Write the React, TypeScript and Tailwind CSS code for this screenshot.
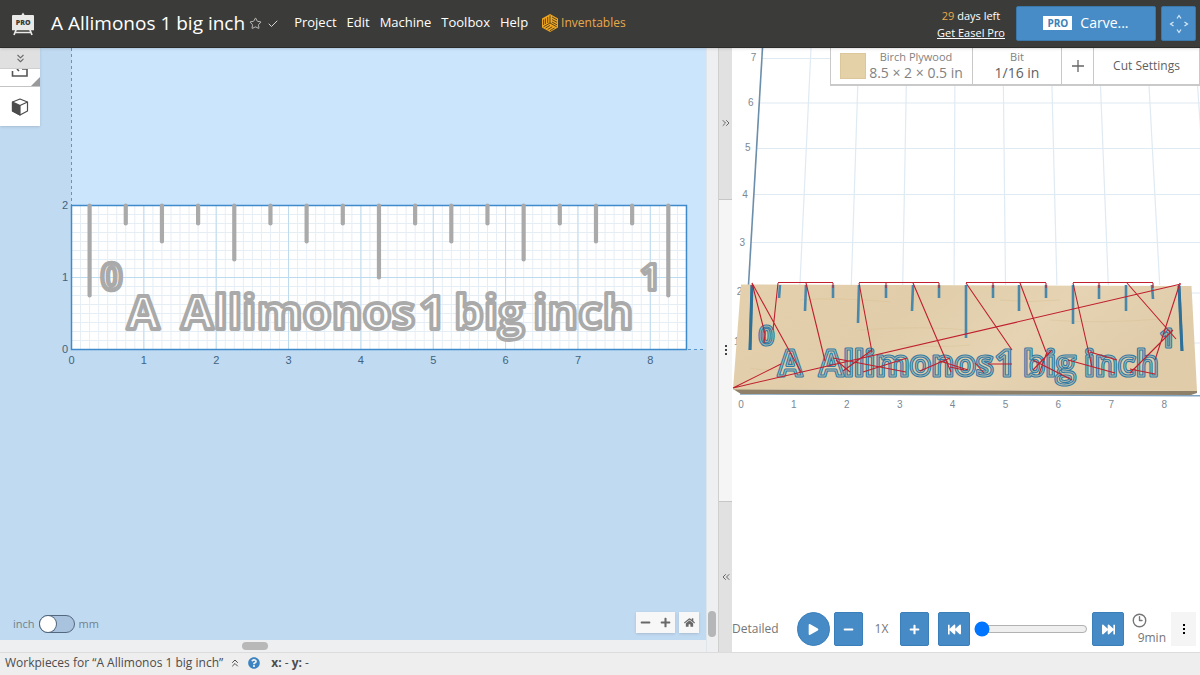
import React from "react";
import {
  Check,
  ChevronsDown,
  ChevronsLeft,
  ChevronsRight,
  ChevronsUp,
  Clock3,
  Star,
} from "lucide-react";
import {
  FaFastBackward,
  FaFastForward,
  FaHome,
  FaMinus,
  FaPlay,
  FaPlus,
  FaQuestionCircle,
} from "react-icons/fa";

const MENUS = ["Project", "Edit", "Machine", "Toolbox", "Help"];

/* Flat design canvas: origin and scale of the drawing, in pixels per inch */
const OX = 71.5;
const OY = 301.5;
const UX = 72.35;
const UY = 72;

const TICK_LENGTHS = [91, 19, 37, 19, 55, 19, 37, 19, 73, 19, 37, 19, 55, 19, 37, 19, 91];

const FLAT_WORDS: [string, number][] = [
  ["A", 127],
  ["Allimonos", 181],
  ["1", 419],
  ["big", 454],
  ["inch", 533],
];

const SOLID_WORDS: [string, number][] = [
  ["A", 778],
  ["Allimonos", 819],
  ["1", 995],
  ["big", 1023],
  ["inch", 1084],
];

/* [x at top, x at bottom, y at bottom] */
const SOLID_TICKS: [number, number, number][] = [
  [752, 750, 350],
  [780, 779, 298],
  [806, 805, 311],
  [833, 833, 298],
  [859, 858, 323],
  [886, 886, 298],
  [913, 912, 311],
  [939, 939, 298],
  [966, 966, 338],
  [993, 993, 298],
  [1019, 1019, 311],
  [1046, 1046, 298],
  [1073, 1073, 324],
  [1099, 1099, 299],
  [1126, 1126, 311],
  [1152, 1153, 299],
  [1179, 1182, 351],
];

const RAPID_MOVES =
  "M778 282.500H833M859 282.500H939M966 282.500H1046M1073 282.500H1153" +
  "M833 283V288M886 283V288M939 283V288M993 283V288M1046 283V288M1099 283V288M1153 283V288" +
  "M752 283L765 334M752 283L801 372M778 283L773 330M806 283L825 361M859 283L872 352" +
  "M913 283L951 372M733 388L781 364M733 388L1181 284M833 358L906 372M836 360L850 372" +
  "M843 371L872 350M863 372L907 358M920 371L950 358M940 361L968 370M966 283L1012 350" +
  "M988 364H1012M975 363L984 373M950 367L964 370M1020 283L1046 352M1033 360L1072 380" +
  "M1033 370L1052 350M1039 374L1047 352M1068 360L1115 373M1073 283L1092 367M1090 352L1117 360" +
  "M1127 283L1176 339M1180 283L1155 360M1130 373L1173 330M1130 369L1155 374M765 334L764 343";

function EaselLogo() {
  return (
    <svg className="h-6 w-6" viewBox="0 0 24 24" aria-hidden="true">
      <path d="M12 0.500l1.600 2.500h-3.200z" fill="#e9e9e7" />
      <rect x="1" y="3" width="22" height="15" rx="1" fill="#e9e9e7" />
      <path d="M1 17.500H23M5 18L3 23M19 18L21 23M4 20.500H20" stroke="#e9e9e7" strokeWidth="1.700" />
      <text
        x="12.200"
        y="13"
        textAnchor="middle"
        fontFamily="Open Sans, sans-serif"
        fontSize="7"
        fontWeight="800"
        fill="#3b3c39"
      >
        PRO
      </text>
    </svg>
  );
}

function InventablesLogo() {
  return (
    <svg className="h-[18px] w-4" viewBox="0 0 16 18" fill="none" aria-hidden="true">
      <path d="M8 0L16 4.500V13.500L8 18L0 13.500V4.500Z" fill="#efa51f" />
      <path
        d="M8 9V1.500M8 9L1.500 12.800M8 9L14.700 12.800M5.700 9V3M3.400 10V4.500M1.600 11V5.500M10 8L15 10.800M10 5.500L15 8.300M10 3L15 5.800M3.500 14L8 11.400M5.700 15.500L10.200 12.800M7.800 16.800L12.500 14"
        stroke="#4b3c1d"
        strokeWidth="0.900"
      />
    </svg>
  );
}

function Header() {
  return (
    <header className="relative z-20 flex h-12 shrink-0 items-center border-b border-[#2c2d2b] bg-[#3b3c39] pr-1 pl-[11px] text-white shadow">
      <EaselLogo />
      <h1 className="ml-4 text-[19px] whitespace-nowrap">A Allimonos 1 big inch</h1>
      <button type="button" aria-label="Favorite" className="ml-1">
        <Star size={13} strokeWidth={1.5} className="text-[#d5d5d3]" />
      </button>
      <Check size={12} strokeWidth={2} className="ml-[5px] text-[#d5d5d3]" />
      <nav className="mb-[2px] ml-[15px] flex items-center gap-[10px] text-[13px]">
        {MENUS.map((m) => (
          <button type="button" key={m}>
            {m}
          </button>
        ))}
        <a href="#inventables" className="ml-1 flex items-center gap-[3px] text-[12px] text-[#e9a94b]">
          <InventablesLogo />
          Inventables
        </a>
      </nav>
      <div className="mr-[11px] ml-auto text-center text-[11px] leading-[17px] whitespace-nowrap">
        <p>
          <span className="text-[#e9a94b]">29</span> days left
        </p>
        <a href="#pro" className="underline">
          Get Easel Pro
        </a>
      </div>
      <button
        type="button"
        className="flex h-[35px] w-[140px] items-center justify-center gap-2 rounded-[2px] border border-[#3a78ac] bg-[#478cc6] pb-[2px] text-[14px]"
      >
        <span className="bg-white px-1 text-[10px] leading-[14px] font-bold text-[#3c80b9]">PRO</span>
        Carve...
      </button>
      <button
        type="button"
        aria-label="Jog machine"
        className="ml-[5px] flex h-[35px] w-[35px] items-center justify-center rounded-[2px] border border-[#3a78ac] bg-[#478cc6]"
      >
        <svg width="20" height="20" viewBox="0 0 20 20" fill="none" stroke="#d9e9f6" strokeWidth="1.200">
          <path d="M8 4.500L10 1.500L12 4.500M8 15.500L10 18.500L12 15.500M4.500 8L1.500 10L4.500 12M15.500 8L18.500 10L15.500 12" />
        </svg>
      </button>
    </header>
  );
}

function FlatDrawing() {
  const minorX = Array.from({ length: 68 }, (_, i) => OX + (i * UX) / 8);
  const minorY = Array.from({ length: 16 }, (_, i) => OY - (i * UY) / 8);
  return (
    <svg className="absolute inset-0 h-full w-full" aria-label="Design canvas">
      <rect x={OX} y="0" width="100%" height={OY} fill="#cbe5fd" />
      <rect x={OX} y={OY - 2 * UY} width={8.5 * UX} height={2 * UY} fill="#fff" />
      <g stroke="#e6eef5">
        {minorX.map((x) => (
          <path key={x} d={`M${x} ${OY - 2 * UY}V${OY}`} />
        ))}
        {minorY.map((y) => (
          <path key={y} d={`M${OX} ${y}H${OX + 8.5 * UX}`} />
        ))}
      </g>
      <g stroke="#bddbee">
        {[1, 2, 3, 4, 5, 6, 7, 8].map((n) => (
          <path key={n} d={`M${OX + n * UX} ${OY - 2 * UY}V${OY}`} />
        ))}
        <path d={`M${OX} ${OY - UY}H${OX + 8.5 * UX}`} />
      </g>
      <path d={`M${OX} 0V${OY}H2000`} fill="none" stroke="#5b97cc" strokeDasharray="3 3" />
      <rect
        x={OX}
        y={OY - 2 * UY}
        width={8.5 * UX}
        height={2 * UY}
        fill="none"
        stroke="#3f8aca"
        strokeWidth="1.500"
      />
      <g stroke="#a9aaa9" strokeWidth="4.200" strokeLinecap="round">
        {TICK_LENGTHS.map((len, i) => (
          <path key={i} d={`M${89.600 + i * 36.170} 157.500V${156.500 + len}`} />
        ))}
      </g>
      <g
        fontFamily="Open Sans, sans-serif"
        fontWeight="700"
        fill="#fdfdfd"
        stroke="#a9aaa9"
        strokeWidth="3.800"
        strokeLinejoin="round"
      >
        {FLAT_WORDS.map(([word, x]) => (
          <text key={x} x={x} y="281" fontSize="47">
            {word}
          </text>
        ))}
        <text x="101" y="242" fontSize="37" strokeWidth="4.500">
          0
        </text>
        <text x="640" y="242" fontSize="36">
          1
        </text>
      </g>
      <g fontFamily="Liberation Sans, sans-serif" fontSize="11" fill="#3f6380" textAnchor="middle">
        {[0, 1, 2, 3, 4, 5, 6, 7, 8].map((n) => (
          <text key={n} x={OX + n * UX} y="316">
            {n}
          </text>
        ))}
        {[0, 1, 2].map((n) => (
          <text key={n} x="65" y={304.500 - n * UY}>
            {n}
          </text>
        ))}
      </g>
    </svg>
  );
}

function ToolStrip() {
  return (
    <div className="relative w-10 bg-white shadow">
      <button
        type="button"
        aria-label="Scroll tools"
        className="flex h-[21px] w-full items-center justify-center border-b border-[#cfcfcf] bg-[#e0e0e0] text-[#6a6a6a]"
      >
        <ChevronsDown size={13} strokeWidth={2} />
      </button>
      <button
        type="button"
        aria-label="Import"
        className="relative flex h-[18px] w-full justify-center border-b border-[#c4c4c4]"
      >
        <svg width="18" height="9" viewBox="0 0 18 9" fill="none" stroke="#555" strokeWidth="1.600">
          <path d="M1.500 2V7H16V0H11M6 0L8 2" />
        </svg>
        <svg className="absolute right-0 bottom-0" width="9" height="9" viewBox="0 0 9 9">
          <path d="M9 0V9H0Z" fill="#999" />
        </svg>
      </button>
      <button type="button" aria-label="3D shapes" className="flex h-[39px] w-full items-center justify-center">
        <svg width="18" height="18" viewBox="0 0 18 18" stroke="#4c4c4c" strokeWidth="1.200" strokeLinejoin="round">
          <path d="M9 1L16.500 4V13L9 17L1.500 13V4Z" fill="#fff" />
          <path d="M1.500 4L9 7.500V17L1.500 13Z" fill="#4c4c4c" />
          <path d="M9 7.500L16.500 4" fill="none" />
        </svg>
      </button>
    </div>
  );
}

function DesignPane() {
  return (
    <section className="flex min-w-0 bg-[#edeff0]">
      <div className="flex min-w-0 flex-1 flex-col">
        <div className="relative flex flex-1 flex-col justify-between overflow-hidden bg-[#c0daf1]">
          <FlatDrawing />
          <ToolStrip />
          <div className="relative flex items-end justify-between pr-[7px] pb-[7px] pl-[13px]">
            <label className="flex items-center gap-1 text-[11px] text-[#71818e]">
              inch
              <input
                type="checkbox"
                role="switch"
                className="flex h-[18px] w-[36px] appearance-none items-center rounded-full border border-[#53687d] bg-[#a9c2de] before:h-4 before:w-4 before:rounded-full before:bg-white before:ring-1 before:ring-[#53687d] checked:justify-end"
              />
              mm
            </label>
            <div className="flex gap-1 text-[#686868]">
              <div className="flex h-[21px] w-[39px] items-center justify-around bg-[#f7f7f7] shadow-sm">
                <button type="button" aria-label="Zoom out">
                  <FaMinus size={11} />
                </button>
                <button type="button" aria-label="Zoom in">
                  <FaPlus size={11} />
                </button>
              </div>
              <button
                type="button"
                aria-label="Reset view"
                className="flex h-[21px] w-5 items-center justify-center bg-[#f7f7f7] shadow-sm"
              >
                <FaHome size={11} />
              </button>
            </div>
          </div>
        </div>
        <div className="flex h-3 justify-center pt-[2px]">
          <div className="mr-[196px] h-2 w-[26px] rounded-full bg-[#b8b8b8]" />
        </div>
      </div>
      <div className="flex w-3 flex-col justify-end border-l border-[#dfe5ea] px-px pb-[15px]">
        <div className="h-[26px] w-2 rounded-full bg-[#b5b6b7]" />
      </div>
    </section>
  );
}

function Splitter() {
  return (
    <div className="flex flex-col border-l border-[#cfcfcf] bg-[#f5f5f5] text-[#666]">
      <button
        type="button"
        aria-label="Expand design"
        className="flex flex-1 items-center justify-center border-b border-[#c6c6c6] bg-[#e1e1e1]"
      >
        <ChevronsRight size={12} strokeWidth={2} />
      </button>
      <div className="flex flex-[2] flex-col items-center justify-center gap-[2px]">
        <span className="h-[2px] w-[2px] bg-[#444]" />
        <span className="h-[2px] w-[2px] bg-[#444]" />
        <span className="h-[2px] w-[2px] bg-[#444]" />
      </div>
      <button
        type="button"
        aria-label="Expand preview"
        className="flex flex-1 items-center justify-center border-t border-[#c6c6c6] bg-[#e1e1e1]"
      >
        <ChevronsLeft size={12} strokeWidth={2} />
      </button>
    </div>
  );
}

function SolidDrawing() {
  return (
    <svg className="absolute inset-0 h-full w-full" aria-label="Carve preview">
      <defs>
        <linearGradient id="wood" x1="0" y1="0" x2="1" y2="0.300">
          <stop offset="0" stopColor="#e4d0ac" />
          <stop offset="0.400" stopColor="#e1cda9" />
          <stop offset="0.700" stopColor="#e5d3b3" />
          <stop offset="1" stopColor="#e0cca9" />
        </linearGradient>
        <g id="carved-words" fontFamily="Open Sans, sans-serif" fontWeight="700" strokeLinejoin="round">
          {SOLID_WORDS.map(([word, x]) => (
            <text key={x} x={x} y="376" fontSize="35">
              {word}
            </text>
          ))}
          <text x="759" y="345" fontSize="26">
            0
          </text>
          <text x="1160" y="347" fontSize="25">
            1
          </text>
        </g>
      </defs>
      <g transform="translate(-732 -48)">
        <g stroke="#dfeaf2" strokeWidth="1.200" fill="none">
          {[58.5, 103, 148.500, 194.500, 242.500].map((y, i) => (
            <path key={y} d={`M${762 - i * 3} ${y}H1300`} />
          ))}
          <path d="M1190 293H1300M1190 343H1300" />
          {[1, 2, 3, 4, 5, 6, 7, 8, 9].map((n) => (
            <path key={n} d={`M${763 + 48 * n} 48L${748.500 + 51.400 * n} 285`} />
          ))}
        </g>
        <path d="M762.500 48L748.500 285" stroke="#6b8eab" strokeWidth="1.600" />
        <g fontFamily="Liberation Sans, sans-serif" fontSize="10" fill="#7b8894" textAnchor="middle">
          {[61, 106, 151, 198, 246, 295, 345].map((y, i) => (
            <text key={y} x={753.500 - i * 2.800} y={y}>
              {7 - i}
            </text>
          ))}
          {[0, 1, 2, 3, 4, 5, 6, 7, 8].map((n) => (
            <text key={n} x={741 + n * 52.900} y="407.500">
              {n}
            </text>
          ))}
        </g>
        <path d="M740 394L1300 396" stroke="#7fa2bf" strokeWidth="1.500" />
        <path d="M733 389L1197 391V393L1191 395L741 394Z" fill="#8f806a" />
        <path d="M741 284.500L1191.500 286L1197 391L733 389.500Z" fill="url(#wood)" />
        <path
          d="M800 300q40-3 90 2M1050 320q50 4 110-1M860 330q60-5 120 1M750 368q12 3 30 1M1000 300q30 3 60 0M900 345q40 3 70 0"
          stroke="#d8c196"
          fill="none"
          opacity="0.500"
        />
        <g strokeWidth="2.600">
          {SOLID_TICKS.map(([x1, x2, y2]) => (
            <path key={x1} d={`M${x1} 285L${x2} ${y2}`} stroke="#4a88ab" />
          ))}
          <path d="M752 285L750 350M1179 286L1182 351" stroke="#2f7098" strokeWidth="3" />
        </g>
        <use href="#carved-words" fill="#e3cfab" stroke="#2f79a5" strokeWidth="3.200" />
        <use href="#carved-words" fill="none" stroke="#a9b5ab" strokeWidth="1" />
        <path d={RAPID_MOVES} stroke="#c01f2e" strokeWidth="1.100" fill="none" />
      </g>
    </svg>
  );
}

const BLUE_BUTTON =
  "flex h-[34px] shrink-0 items-center justify-center rounded-[2px] border border-[#3a7fb9] bg-[#468bc5] text-white";

function PlaybackBar() {
  return (
    <div className="relative flex h-[46px] items-center pr-1 text-[12px] text-[#767676]">
      <button type="button" className="w-[65px] text-left">
        Detailed
      </button>
      <button
        type="button"
        aria-label="Play"
        className="flex h-[34px] w-[33px] shrink-0 items-center justify-center rounded-full border border-[#3a7fb9] bg-[#468bc5] text-white"
      >
        <FaPlay size={11} />
      </button>
      <button type="button" aria-label="Slower" className={BLUE_BUTTON + " ml-1 w-[29px]"}>
        <FaMinus size={11} />
      </button>
      <span className="w-[37px] text-center">1X</span>
      <button type="button" aria-label="Faster" className={BLUE_BUTTON + " w-[29px]"}>
        <FaPlus size={11} />
      </button>
      <button type="button" aria-label="Rewind" className={BLUE_BUTTON + " ml-[9px] w-8"}>
        <FaFastBackward size={13} />
      </button>
      <input
        type="range"
        aria-label="Progress"
        min={0}
        max={100}
        defaultValue={0}
        className="mx-1 min-w-0 flex-1"
      />
      <button type="button" aria-label="Fast forward" className={BLUE_BUTTON + " w-8"}>
        <FaFastForward size={13} />
      </button>
      <div className="ml-2 flex w-[34px] flex-col gap-[2px]">
        <Clock3 size={15} strokeWidth={2.2} />
        <span className="text-right text-[12px] leading-4">9min</span>
      </div>
      <button
        type="button"
        aria-label="More options"
        className="ml-[5px] flex h-[34px] w-[25px] shrink-0 flex-col items-center justify-center gap-[2px] bg-[#f5f5f5]"
      >
        <span className="h-[2px] w-[2px] bg-black" />
        <span className="h-[2px] w-[2px] bg-black" />
        <span className="h-[2px] w-[2px] bg-black" />
      </button>
    </div>
  );
}

function PreviewPane() {
  return (
    <section className="relative flex min-w-0 flex-col justify-between overflow-hidden bg-white">
      <SolidDrawing />
      <div className="relative flex h-[38px] self-end border-x border-b-2 border-[#c9c9c9] bg-white text-[#5f5f5f]">
        <button type="button" className="flex w-[142px] items-center justify-center gap-[3px] border-r border-[#c9c9c9]">
          <span className="h-[26px] w-[26px] border border-[#dcc79d] bg-[#e5d1a8]" />
          <span className="text-center whitespace-nowrap text-[#828282]">
            <span className="block text-[11px] leading-[14px]">Birch Plywood</span>
            <span className="block text-[14px] leading-[18px]">8.5 × 2 × 0.5 in</span>
          </span>
        </button>
        <button type="button" className="w-[89px] border-r border-[#c9c9c9] text-center">
          <span className="block text-[11px] leading-[14px] text-[#828282]">Bit</span>
          <span className="block text-[14px] leading-[18px]">1/16 in</span>
        </button>
        <button
          type="button"
          aria-label="Add bit"
          className="flex w-8 items-center justify-center border-r border-[#c9c9c9]"
        >
          <svg width="12" height="12" viewBox="0 0 12 12" stroke="#666" strokeWidth="1.300">
            <path d="M6 0V12M0 6H12" />
          </svg>
        </button>
        <button type="button" className="w-[105px] text-center text-[12px]">
          Cut Settings
        </button>
      </div>
      <PlaybackBar />
    </section>
  );
}

function Footer() {
  return (
    <footer className="flex h-[23px] shrink-0 items-center border-t border-[#dcdcdc] bg-[#eee] pb-[2px] pl-[5px] text-[12px] text-[#4c4c4c]">
      <button type="button" className="flex items-center gap-[6px]">
        Workpieces for “A Allimonos 1 big inch”
        <ChevronsUp size={12} strokeWidth={2} />
      </button>
      <button type="button" aria-label="Help" className="ml-[7px] text-[#3b83c2]">
        <FaQuestionCircle size={12} />
      </button>
      <p className="ml-[11px] text-[12px]">
        <b>x:</b> - <b>y:</b> -
      </p>
    </footer>
  );
}

export default function App() {
  return (
    <div className="flex min-h-screen flex-col font-['Open_Sans',sans-serif]">
      <Header />
      <main className="grid min-h-[520px] flex-1 grid-cols-[718fr_14px_468fr]">
        <DesignPane />
        <Splitter />
        <PreviewPane />
      </main>
      <Footer />
    </div>
  );
}
